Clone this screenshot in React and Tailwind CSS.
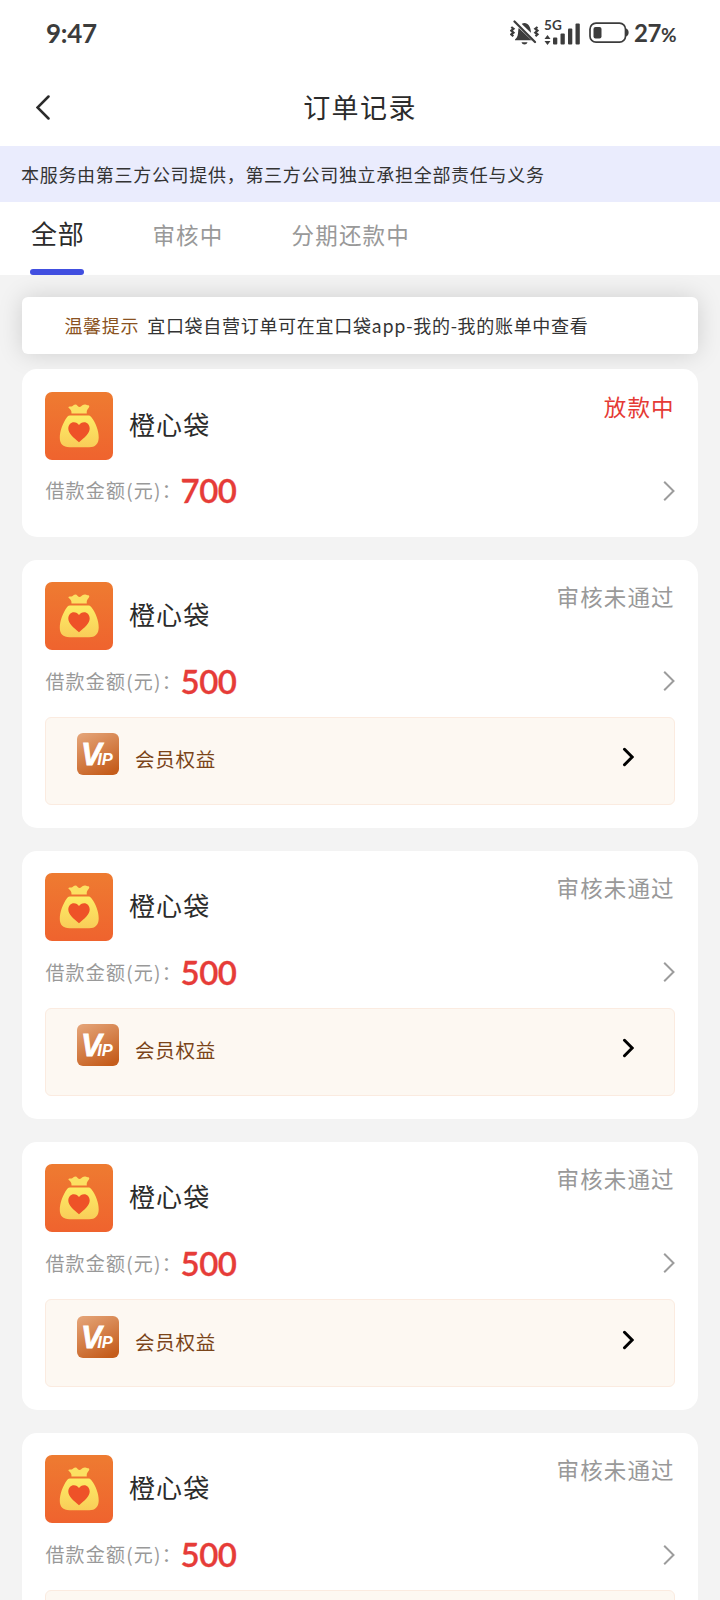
const TABS = ['全部', '审核中', '分期还款中']

const ORDERS = [
  { id: 1, name: '橙心袋', amount: 700, status: '放款中', active: true, vip: false },
  { id: 2, name: '橙心袋', amount: 500, status: '审核未通过', active: false, vip: true },
  { id: 3, name: '橙心袋', amount: 500, status: '审核未通过', active: false, vip: true },
  { id: 4, name: '橙心袋', amount: 500, status: '审核未通过', active: false, vip: true },
  { id: 5, name: '橙心袋', amount: 500, status: '审核未通过', active: false, vip: true },
]

function MutedBell() {
  return (
    <svg width="30" height="26" viewBox="0 0 30 26" fill="none">
      <path d="M5 19.500c2.800-2 3-5 3.200-8.500.3-4 2.600-8 6.300-8s6 4 6.300 8c.2 3.500.4 6.500 3.200 8.500v.8H5z" fill="#3c3c3c" />
      <path d="M11.500 22.300h6c-.5 1.500-1.600 2.200-3 2.200s-2.500-.7-3-2.200z" fill="#3c3c3c" />
      <path d="M5 1 27.500 22.500" stroke="#fff" strokeWidth="5" />
      <path d="M4.500 1.500 25 22" stroke="#3c3c3c" strokeWidth="2.200" strokeLinecap="round" />
      <path d="m1.300 7 2.200 1.800-2.200 1.800 2.200 2-2.200 1.800 2 1.800M27.500 7l-2.200 1.800 2.200 1.800-2.200 2 2.200 1.800-2 1.800" stroke="#3c3c3c" strokeWidth="2.200" />
    </svg>
  )
}

function Signal() {
  return (
    <div className="relative h-[26px] w-9">
      <span className="absolute -top-px left-0 text-[13.500px] font-bold leading-[12px]">5G</span>
      <svg width="36" height="26" viewBox="0 0 36 26" fill="#3c3c3c">
        <path d="M3.500 15 6.500 19h-6zM3.500 25 .5 21h6z" />
        <rect x="9" y="17.500" width="4.300" height="7" rx="1" />
        <rect x="16.500" y="13.500" width="4.300" height="11" rx="1" />
        <rect x="24" y="8.500" width="4.300" height="16" rx="1" />
        <rect x="31.500" y="3.500" width="4.300" height="21" rx="1" />
      </svg>
    </div>
  )
}

function Battery() {
  return (
    <svg width="40" height="22" viewBox="0 0 40 22" fill="none">
      <rect x="1" y="1.200" width="35.500" height="19" rx="6" stroke="#3c3c3c" strokeWidth="1.700" />
      <rect x="4.500" y="5" width="8" height="11.500" rx="2" fill="#3c3c3c" />
      <path d="M37 6.500c1.700.6 2.600 2 2.600 4s-.9 3.400-2.600 4z" fill="#3c3c3c" />
    </svg>
  )
}

function StatusBar() {
  return (
    <div className="flex h-[66px] items-center justify-between pl-[46px] pr-[44px] font-['Lato'] text-[#3c3c3c]">
      <span className="text-[26px] font-bold leading-none tracking-[-0.300px]">9:47</span>
      <div className="flex items-center">
        <MutedBell />
        <div className="ml-1">
          <Signal />
        </div>
        <div className="ml-[9px]">
          <Battery />
        </div>
        <span className="pl-[5px] text-[24px] font-bold leading-none tracking-[-0.500px]">
          27<span className="text-[19px]">%</span>
        </span>
      </div>
    </div>
  )
}

function BagLogo() {
  return (
    <svg className="shrink-0" width="68" height="68" viewBox="0 0 68 68">
      <defs>
        <linearGradient id="tile" x1="0" y1="0" x2="0" y2="1">
          <stop offset="0" stopColor="#ee7b31" />
          <stop offset="1" stopColor="#ef632e" />
        </linearGradient>
        <linearGradient id="bag" x1="0" y1="0" x2="0" y2="1">
          <stop offset="0" stopColor="#fdec66" />
          <stop offset="1" stopColor="#f9cd58" />
        </linearGradient>
      </defs>
      <rect width="68" height="68" rx="7" fill="url(#tile)" />
      <path d="M26.500 21.500c.2-3-1-4-2.700-5.500-.8-.8-.2-1.700 1-1.600 1.900.2 2.700-.3 3.700-1.200 1.400-1.200 3-.9 4.200.7 1 1.300 2.300 1.500 3.500.4 1.500-1.400 3-2.300 4.900-1.500 1.100.5 2.300.3 3 1 .6.700-.2 1.900-1.100 2.900-1 1.200-1.500 2.500-1.200 4.800z" fill="#fce062" />
      <path d="M24.800 23.500h18.400c1.500 0 2.300.6 3.200 1.800 4 5 7.500 13.200 7.300 20.500-.2 6.300-3.500 9.500-9.500 9.500H24.500c-6.500 0-9.700-3.500-9.700-9.500 0-7 3.200-15 7-20.300.9-1.300 1.500-2 3-2z" fill="url(#bag)" />
      <path d="M34 50.200C28.500 45.700 23.300 41.500 23.300 36.500c0-3.800 2.500-6.300 5.600-6.300 2.200 0 4 1 5.100 2.900 1.100-1.900 2.900-2.900 5.100-2.900 3.100 0 5.600 2.500 5.600 6.300 0 5-5.200 9.200-10.700 13.700z" fill="#ee5228" />
    </svg>
  )
}

function VipBadge() {
  return (
    <svg className="shrink-0" width="42" height="42" viewBox="0 0 42 42">
      <defs>
        <linearGradient id="vip" x1="0.200" y1="0" x2="0.700" y2="1">
          <stop offset="0" stopColor="#e3a174" />
          <stop offset="1" stopColor="#c55d1c" />
        </linearGradient>
      </defs>
      <rect width="42" height="42" rx="6" fill="url(#vip)" />
      <text x="4" y="32.300" fontSize="31" fill="#fff" fontFamily="Liberation Sans" fontWeight="700" fontStyle="italic">
        <tspan stroke="#fff" strokeWidth="0.800">V</tspan>
        <tspan dx="-4.500" fontSize="16.500">IP</tspan>
      </text>
    </svg>
  )
}

function OrderCard({ order }) {
  return (
    <div className="rounded-[15px] bg-white px-[23px] pt-[22.500px] pb-[22.500px]">
      <div className="flex items-start">
        <BagLogo />
        <span className="ml-[15.500px] mt-[15px] text-[26px] leading-[34px] tracking-[1.200px] text-[#2b2b2b]">{order.name}</span>
        <span
          className={`ml-auto text-[22.500px] leading-[28px] tracking-[1.100px] ${
            order.active ? 'text-[#e53a35]' : 'text-[#999]'
          }`}
        >
          {order.status}
        </span>
      </div>
      <div className="mt-[10.200px] flex h-[42px] items-center justify-between">
        <div className="flex items-center">
          <span className="w-[135px] whitespace-nowrap text-[19px] tracking-[1.200px] text-[#999]">借款金额(元)：</span>
          <span className="font-['Lato'] text-[33px] font-semibold leading-none tracking-[-0.400px] [-webkit-text-stroke:0.3px_#e63c38] text-[#e63c38]">
            {order.amount}
          </span>
        </div>
        <svg width="12" height="22" viewBox="0 0 12 22" fill="none">
          <path d="m1.200 1.700 9.300 9.300-9.300 9.300" stroke="#9c9c9c" strokeWidth="2" />
        </svg>
      </div>
      {order.vip ? (
        <div className="mt-[14.800px] mb-[0.500px] flex h-[88px] items-start rounded-[6px] border border-[#fbebe0] bg-[#fdf8f2] pl-[31px] pr-[40px] pt-[15.300px]">
          <VipBadge />
          <span className="ml-[15.500px] mt-[12px] text-[19.500px] leading-[28px] tracking-[0.800px] text-[#7a4419]">会员权益</span>
          <svg className="ml-auto mt-[14px]" width="12" height="20" viewBox="0 0 12 20" fill="none">
            <path d="m2.500 2.300 7.700 7.700-7.700 7.700" stroke="#000" strokeWidth="3" strokeLinecap="round" />
          </svg>
        </div>
      ) : (
        <div className="h-[2.800px]" />
      )}
    </div>
  )
}

export default function App() {
  return (
    <div className="h-[1600px] w-[720px] overflow-hidden bg-[#f3f3f3] font-['Noto_Sans_CJK_SC',sans-serif]">
      <div className="bg-white">
        <StatusBar />
        <div className="flex h-[80px] items-center justify-between px-9 pt-[3px]">
          <svg width="14" height="25" viewBox="0 0 14 25" fill="none">
            <path d="m12.500 1.500-11 11 11 11" stroke="#2b2b2b" strokeWidth="2.500" strokeLinecap="round" />
          </svg>
          <h1 className="text-[27px] tracking-[1.400px] text-[#2b2b2b]">订单记录</h1>
          <div className="w-3.5" />
        </div>
      </div>

      <div className="flex h-[56px] items-center bg-[#eaecfd] pl-[21px] text-[18px] tracking-[0.700px] text-[#333]">
        本服务由第三方公司提供，第三方公司独立承担全部责任与义务
      </div>

      <div className="flex h-[72.500px] gap-[68px] bg-white pl-[30px]">
        {TABS.map((tab, i) => (
          <div key={tab} className="flex flex-col justify-between">
            {i === 0 ? (
              <>
                <span className="mt-[14px] pl-px text-[26px] leading-[34px] tracking-[0.700px] text-[#2b2b2b]">{tab}</span>
                <div className="h-[5.500px] rounded-full bg-[#414fe0]" />
              </>
            ) : (
              <span className="mt-[17px] text-[22.500px] leading-[30px] tracking-[1.200px] text-[#999]">{tab}</span>
            )}
          </div>
        ))}
      </div>

      <div className="px-[22.400px] pt-[22.500px]">
        <div className="flex h-[57px] items-center rounded-[6px] bg-white pl-[42px] text-[18px] tracking-[0.700px] shadow-[0_0_24px_rgba(0,0,0,0.150)]">
          <span className="text-[#8a5221]">温馨提示</span>
          <span className="ml-[8px] text-[#333]">宜口袋自营订单可在宜口袋app-我的-我的账单中查看</span>
        </div>
        <div className="relative mt-[15px] flex flex-col gap-[22.600px]">
          {ORDERS.map((order) => (
            <OrderCard key={order.id} order={order} />
          ))}
        </div>
      </div>
    </div>
  )
}
